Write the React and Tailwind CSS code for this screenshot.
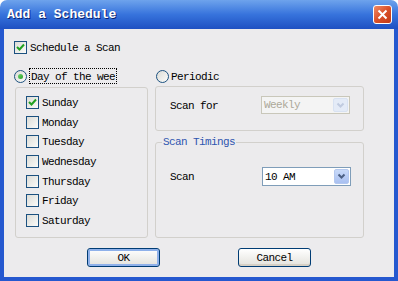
import React from 'react';

function CheckBox({ checked, label }) {
  return (
    <div className="flex items-center h-[13px]">
      <span className="w-[13px] h-[13px] shrink-0 border border-[#1c5180] bg-gradient-to-br from-[#dcdcd7] to-[#fbfbf9] flex items-center justify-center">
        {checked && (
          <svg width="9" height="9" viewBox="0 0 9 9">
            <polyline points="1,4 3.5,6.5 8,1.5" fill="none" stroke="#21a121" strokeWidth="2" />
          </svg>
        )}
      </span>
      <span className="ml-[3px] leading-[13px] pt-[2px]">{label}</span>
    </div>
  );
}

function Radio({ checked }) {
  return (
    <span className="w-[13px] h-[13px] shrink-0 rounded-full border border-[#1c5180] bg-gradient-to-br from-[#dcdcd7] to-[#fbfbf9] flex items-center justify-center">
      {checked && <span className="w-[5px] h-[5px] rounded-full bg-gradient-to-br from-[#6ed36e] to-[#21a121]" />}
    </span>
  );
}

function Chevron({ color }) {
  return (
    <svg width="9" height="7" viewBox="0 0 9 7">
      <polyline points="1.5,1.5 4.5,4.5 7.5,1.5" fill="none" stroke={color} strokeWidth="2" />
    </svg>
  );
}

function Combo({ value, disabled, className }) {
  return (
    <div
      className={`flex items-center border ${
        disabled ? 'border-[#c9c7ba] bg-[#f4f4f4] text-[#aca899]' : 'border-[#7f9db9] bg-white text-black'
      } ${className}`}
    >
      <span className="flex-1 pl-[2px] leading-[13px] pt-[1px]">{value}</span>
      <span
        className={`w-[15px] mr-[1px] self-stretch my-[1px] rounded-[2px] flex items-center justify-center ${
          disabled
            ? 'bg-[#e4ebf7] border border-[#d8e2f2]'
            : 'bg-gradient-to-b from-[#c9daf9] to-[#a9c0f1] border border-[#b4c8ef]'
        }`}
      >
        <Chevron color={disabled ? '#c0cbe0' : '#4d6185'} />
      </span>
    </div>
  );
}

function Button({ children, focused }) {
  return (
    <button
      className={`w-[73px] h-[19px] rounded-[3px] border border-[#003c74] bg-gradient-to-b from-white to-[#e3e2dc] flex items-center justify-center leading-[13px] pt-[1px] ${
        focused ? 'shadow-[inset_0_0_0_2px_#8fb1ea]' : 'shadow-[inset_0_-2px_0_#d6d0c5]'
      }`}
    >
      {children}
    </button>
  );
}

export default function App() {
  const days = ['Sunday', 'Monday', 'Tuesday', 'Wednesday', 'Thursday', 'Friday', 'Saturday'];

  return (
    <div className="w-[398px] h-[281px] flex flex-col font-['Liberation_Mono',monospace] text-[11px] tracking-[-0.6px] text-black">
      {/* Title bar */}
      <div className="h-[29px] shrink-0 rounded-t-[7px] bg-gradient-to-b from-[#6ea3ec] via-[#3773dc] to-[#1f50c2] flex items-center pl-[7px] pr-[6px]">
        <span className="flex-1 text-white font-bold text-[13px] tracking-normal pt-[1px] [text-shadow:1px_1px_#0b2370]">
          Add a Schedule
        </span>
        <span className="w-[19px] h-[19px] rounded-[3px] border border-white bg-gradient-to-br from-[#f08a64] via-[#d94f28] to-[#c23a16] flex items-center justify-center">
          <svg width="11" height="11" viewBox="0 0 11 11">
            <path d="M1.5 1.5 L9.5 9.5 M9.5 1.5 L1.5 9.5" stroke="white" strokeWidth="2" />
          </svg>
        </span>
      </div>

      {/* Body */}
      <div className="flex-1 bg-[#ecebed] border-x-4 border-b-4 border-[#2558cf] pl-[10px] pt-[12px]">
        <CheckBox checked label="Schedule a Scan" />

        <div className="flex mt-[14px]">
          {/* Left column */}
          <div className="w-[134px]">
            <div className="h-[16px] flex items-center">
              <Radio checked />
              <span className="ml-[2px] px-[1px] h-[16px] border border-dotted border-black leading-[14px] pt-[1px]">Day of the wee</span>
            </div>
            <div className="mt-[3px] ml-[1px] w-[133px] h-[151px] border border-[#d2d0cc] rounded-[3px] pl-[10px] pt-[8px] flex flex-col">
              {days.map((d, i) => (
                <div key={d} className="h-[19.7px]">
                  <CheckBox checked={i === 0} label={d} />
                </div>
              ))}
            </div>
          </div>

          {/* Right column */}
          <div className="ml-[7px] w-[209px]">
            <div className="h-[16px] flex items-center pl-[1px]">
              <Radio />
              <span className="ml-[2px] leading-[14px] pt-[2px]">Periodic</span>
            </div>
            <div className="mt-[2px] h-[45px] border border-[#d2d0cc] rounded-[3px] pl-[14px] pt-[9px] flex">
              <span className="w-[91px] leading-[18px] pt-[1px]">Scan for</span>
              <Combo value="Weekly" disabled className="w-[89px] h-[18px]" />
            </div>
            <fieldset className="mt-[5px] h-[102px] border border-[#d2d0cc] rounded-[3px]">
              <legend className="ml-[6px] px-[1px] leading-[12px] text-[#2f56b0]">Scan Timings</legend>
              <div className="pl-[14px] pt-[19px] flex">
                <span className="w-[92px] leading-[19px] pt-[1px]">Scan</span>
                <Combo value="10 AM" className="w-[89px] h-[19px]" />
              </div>
            </fieldset>
          </div>
        </div>

        <div className="flex mt-[10px] ml-[73px] gap-[78px]">
          <Button focused>OK</Button>
          <Button>Cancel</Button>
        </div>
      </div>
    </div>
  );
}
